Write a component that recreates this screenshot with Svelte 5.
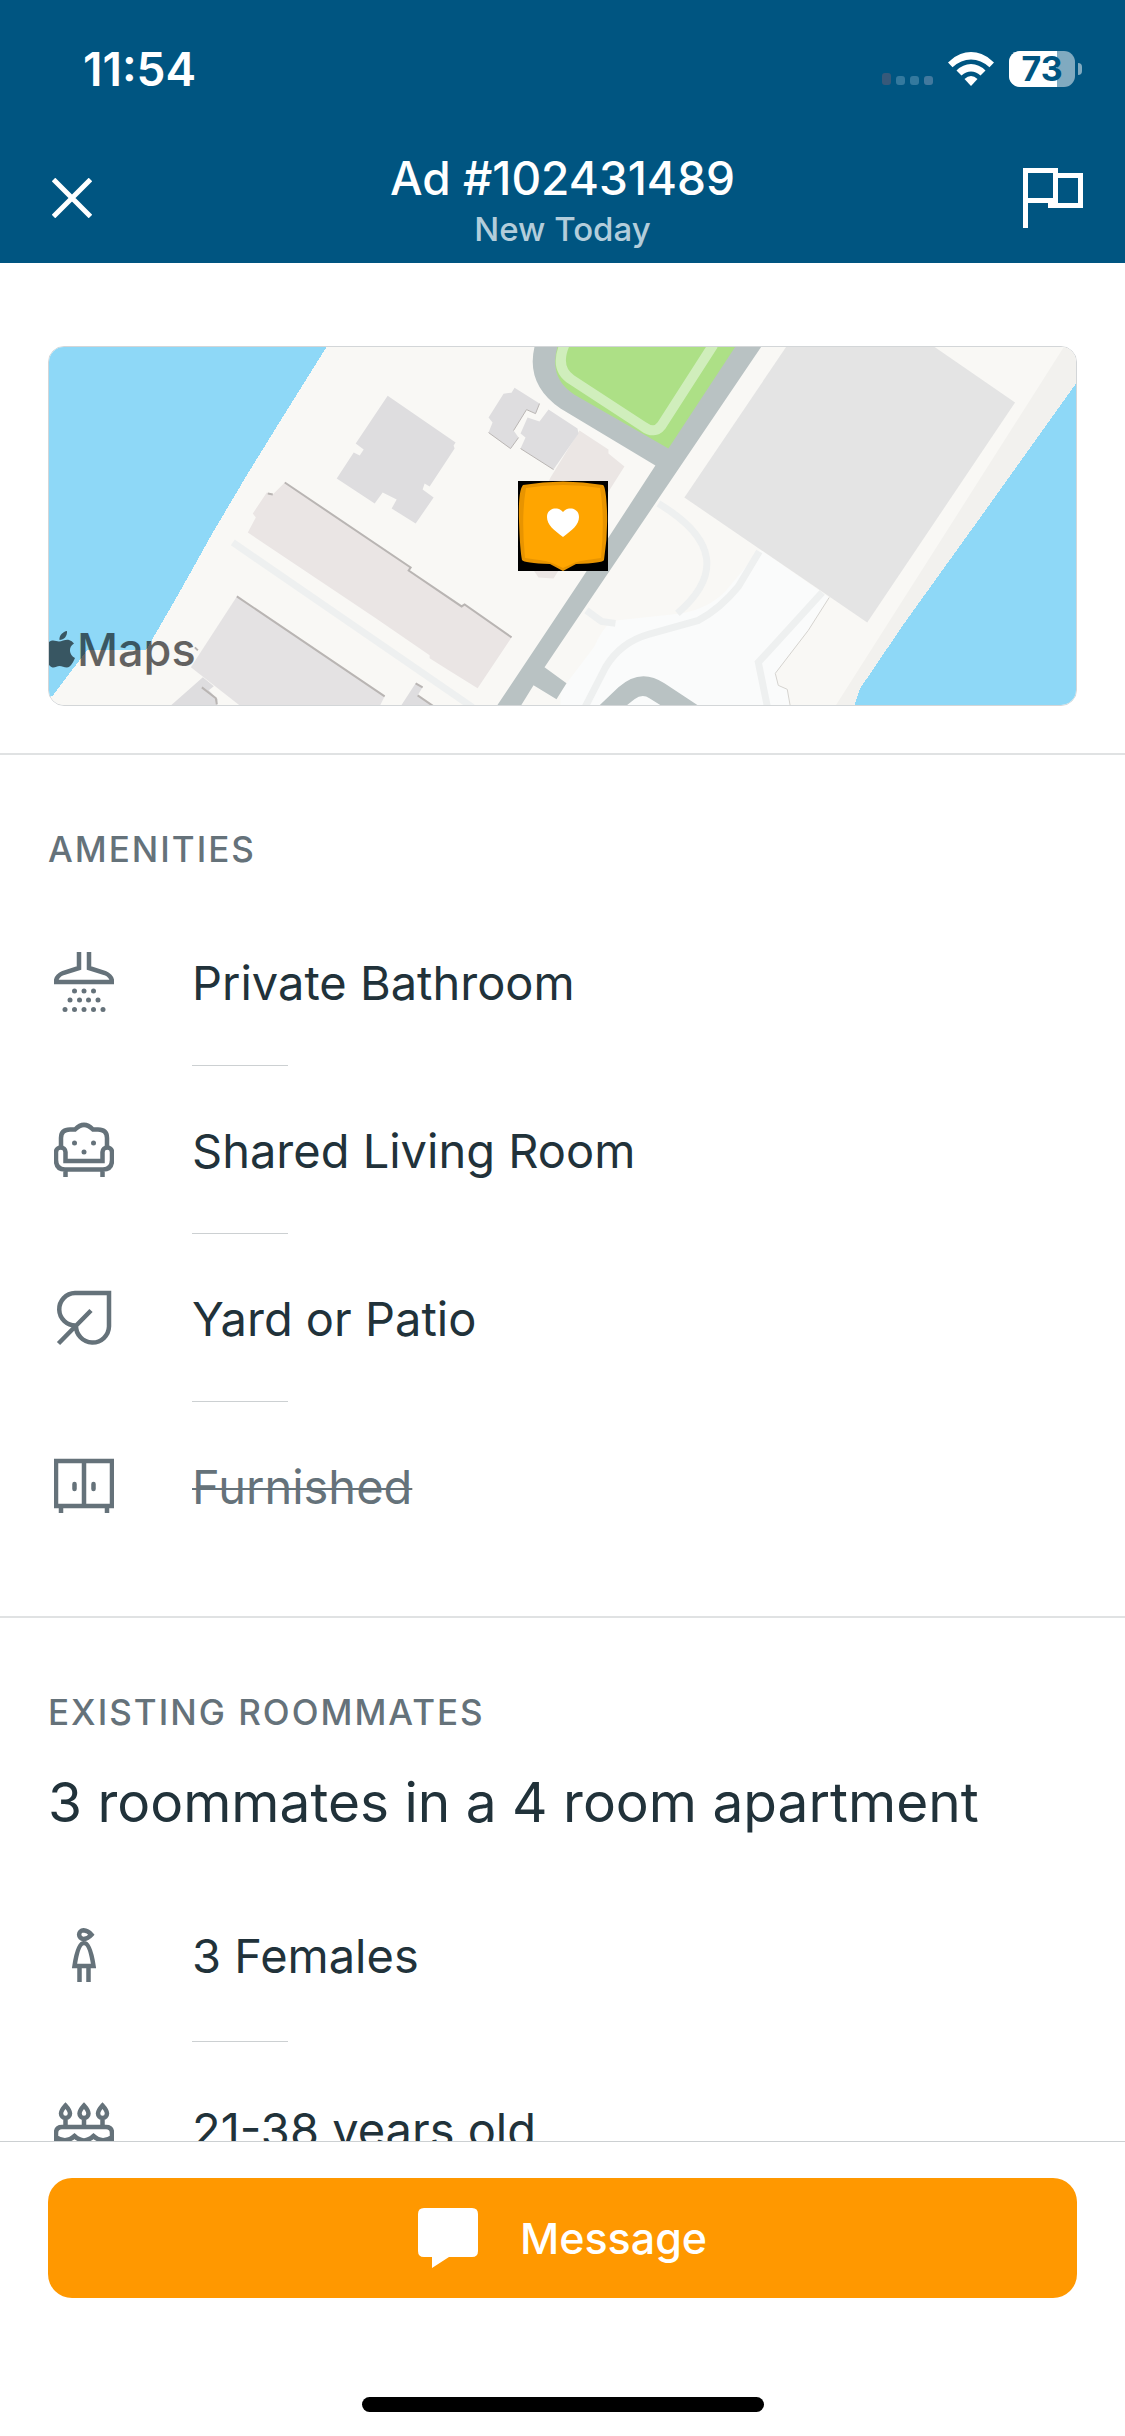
<script>
  export let adNumber = '102431489';
  export let time = '11:54';
  export let battery = 73;

  let amenities = [
    { icon: 'shower', label: 'Private Bathroom', available: true },
    { icon: 'sofa', label: 'Shared Living Room', available: true },
    { icon: 'leaf', label: 'Yard or Patio', available: true },
    { icon: 'cabinet', label: 'Furnished', available: false },
  ];
  let roommates = [
    { icon: 'female', label: '3 Females' },
    { icon: 'cake', label: '21-38 years old' },
  ];
</script>

<div class="screen">
  <header>
    <div class="status">
      <span class="time">{time}</span>
      <div class="indicators">
        <svg class="signal" width="51" height="12" viewBox="0 0 51 12" aria-hidden="true">
          <rect width="9" height="12" rx="3" fill="#37597a" />
          <rect x="14" y="3" width="9" height="9" rx="3" fill="#34799e" />
          <rect x="28" y="3" width="9" height="9" rx="3" fill="#34799e" />
          <rect x="42" y="3" width="9" height="9" rx="3" fill="#42799e" />
        </svg>
        <svg class="wifi" width="46" height="34" viewBox="0 0 46 34" aria-hidden="true">
          <path d="M0 10.500Q1 9.500 3 8Q12 0 23 0T43 8Q45 9.500 46 10.500L41.500 15.300Q33 7.500 23 7.500T4.500 15.300Z" fill="#fff" />
          <path d="M8.500 18.500Q15 12 23 12T37.500 18.500L32.500 23.500Q28 19.500 23 19.500T13.500 23.500Z" fill="#fff" />
          <path d="M16.500 27Q23 21 29.500 27L23 34Z" fill="#fff" />
        </svg>
        <div class="battery">
          <div class="level" style="width: {battery}%"></div>
          <span>{battery}</span>
        </div>
        <div class="nub"></div>
      </div>
    </div>
    <div class="nav">
      <button class="icon-button" aria-label="Close">
        <svg width="40" height="40" viewBox="0 0 40 40"><path d="M1.500 1.500 38.500 38.500M38.500 1.500 1.500 38.500" /></svg>
      </button>
      <div class="titles">
        <h1>Ad #{adNumber}</h1>
        <p>New Today</p>
      </div>
      <button class="icon-button flag" aria-label="Report this ad">
        <svg width="60" height="60" viewBox="0 0 60 60"><path d="M2.500 60V2.500H32.500V32.500H2.500M32.500 7.500H57.500V37.500H27.500V32.500" /></svg>
      </button>
    </div>
  </header>

  <main>
    <section class="map-section">
      <div class="map">
        <svg class="map-art" viewBox="0 0 1028 359" preserveAspectRatio="xMidYMid slice" aria-hidden="true">
          <rect width="1028" height="359" fill="#f9f8f5" />
          <path d="M1016 0H1030V34L925 181 856 277 812 342 806 360H787Z" fill="#f2f1ee" />
          <!-- river -->
          <g fill="#8ed8f7" shape-rendering="crispEdges">
            <path d="M0 0H278L233 72 199 127 164 186 130 247 97 304H38L4 349 0 352Z" />
            <path d="M1030 34 925 181 856 277 812 342 806 360H1030Z" />
          </g>
          <!-- plaza and footpaths -->
          <path d="M712 203 781 251 760 284 727 327 730 339 739 343 742 360H512V345L546 300Q556 277 567 274L633 267Q660 262 677 245Z" fill="#fafbfb" />
          <path d="M781 251 760 284 727 327 730 339 739 343 742 360" fill="none" stroke="#d5d3cf" />
          <g fill="none" stroke="#eef0f0" stroke-width="7">
            <path d="M184 196 424 361" />
            <path d="M711 205 690 240Q672 262 650 274L600 288Q572 296 557 321L536 362" />
            <path d="M774 246 722 303 710 316 719 360" />
            <path d="M610 157C670 193 672 230 629 267M538 264 553 275 567 277" />
          </g>
          <!-- streets -->
          <g fill="#b9c2c3">
            <path d="M486 0H713L512 297 496 321 518 337 508 353 485 339 472 360H448L532 234 607 119 512 62Q477 38 486 0Z" />
            <path d="M550 360 570 341Q592 321 616 337L651 360H614L601 352Q594 347 586 353L577 360Z" />
          </g>
          <path d="M509 0H687L620 102 526 48Q500 32 509 0Z" fill="#ade086" />
          <path d="M665 -2 613 79Q606 88 595 80L523 33Q506 22 516 -2" fill="none" stroke="#d0eebc" stroke-width="10" />
          <!-- buildings -->
          <path d="M738 0H886L967 56 819 276 636 151Z" fill="#e4e4e4" />
          <path d="M531 84 560 103 560 107 576 120 505 232 490 231 469 200 502 131Z" fill="#ebe6e4" />
          <g fill="#dedddf">
            <path d="M339 49 407 96 405 99 406 102 381 140 376 137 374 143 385 151 367 177 343 162 348 153 334 146 326 157 288 132 305 106 311 109 315 103 307 97Z" />
            <path d="M466 41 491 57 487 67 478 63 465 84 470 91 462 102 440 86 444 76 440 71 455 47 463 46Z" />
            <path d="M500 63 529 82 530 87 505 123 472 102 477 91 472 87 479 71 491 75Z" />
            <path d="M154 331 165 340 160 344 169 353 168 360H121L137 346ZM367 337 374 341 369 349 385 360H352Z" />
          </g>
          <path d="M236 136 362 221 360 224 413 260 416 258 463 291 429 342 400 324 381 312 381 309 326 271 199 186 207 171 204 167 218 146 224 148Z" fill="#eae5e4" />
          <path d="M188 250 336 350 331 360H192L142 321Z" fill="#e4e2e3" />
          <g fill="none" stroke="#b9b5b3" stroke-width="2">
            <path d="M236 136 362 221 360 224 413 260 416 258 463 291M188 250 336 350M219 147 224 148M146 301 149 304M153 341 167 352 168 358M367 337 374 341M369 349 385 360" />
            <path d="M491 57 487 67 478 63 465 84M470 91 462 102 440 86M472 102 505 123" stroke-width="1" />
          </g>
        </svg>
        <div class="attribution">
          <svg width="26" height="37" viewBox="0 0 26 37" aria-hidden="true">
            <path d="M18 0C18.500 5 15 9 10.500 9C10 4.500 14 .5 18 0ZM0 11C4 8 7 10.500 10 10.500S17 8 20 9Q23 9.800 25 12.500C19 16 20 24 26 27Q22 36.500 18 36.500C15 36.500 13 35 10.500 35S6 37 3.500 36.500Q2 36 0 34Z" />
          </svg>
          <span>Maps</span>
        </div>
        <svg class="pin" width="90" height="90" viewBox="0 0 90 90" role="img" aria-label="Ad location">
          <rect width="90" height="90" />
          <path d="M5 4Q45 -3 85 4Q88 6 89 30T86 79Q85 82 58 83L45 90 32 83Q6 82 4 79Q2 70 1 40T5 4Z" fill="#e89400" />
          <path d="M8 7Q45 1 82 7Q87 35 83 77Q60 80 56 82L45 87 34 82Q30 80 7 77Q3 35 8 7Z" fill="#ffa500" />
          <path d="M45 56C36 49 29 44 29 36C29 27 40 25 45 31C50 25 61 27 61 36C61 44 54 49 45 56Z" fill="#fff" />
        </svg>
      </div>
    </section>

    <section>
      <h2>Amenities</h2>
      <ul class="amenities">
        {#each amenities as item}
          <li class:missing={!item.available}>
            <svg class="icon" width="60" height="60" viewBox="0 0 60 60" aria-hidden="true">
              {#if item.icon === 'shower'}
                <path d="M25 0V16L9 21Q2 24 2 30H58Q58 24 51 21L35 16V0" />
                <g class="dots">
                  <circle cx="20.500" cy="39" r="2.500" /><circle cx="30" cy="39" r="2.500" /><circle cx="39.500" cy="39" r="2.500" />
                  <circle cx="16" cy="48" r="2.500" /><circle cx="25.500" cy="48" r="2.500" /><circle cx="34.500" cy="48" r="2.500" /><circle cx="44" cy="48" r="2.500" />
                  <circle cx="11" cy="57.500" r="2.500" /><circle cx="20.500" cy="57.500" r="2.500" /><circle cx="30" cy="57.500" r="2.500" /><circle cx="39.500" cy="57.500" r="2.500" /><circle cx="49" cy="57.500" r="2.500" />
                </g>
              {:else if item.icon === 'sofa'}
                <path d="M7 28V18Q7 9.500 16 9.500H21Q30 .5 39 9.500H44Q53 9.500 53 18V28" />
                <path d="M11.500 41H48.500V32C48.500 26 58 26 58 32V40Q58 49.500 49 49.500H11Q2 49.500 2 40V32C2 26 11.500 26 11.500 32ZM11.500 50V57M48.500 50V57" />
                <g class="dots"><circle cx="20.500" cy="23" r="2.500" /><circle cx="39.500" cy="23" r="2.500" /><circle cx="30" cy="32" r="2.500" /></g>
              {:else if item.icon === 'leaf'}
                <path d="M22 37.500A16.250 16.250 0 0 1 21 5H55V38.500A16 16 0 0 1 22 37.500ZM4.500 55.500 37 22.500" />
              {:else}
                <path d="M2 5H58V50H2ZM30 5V50M7 50V57M53 50V57" />
                <path d="M20.500 28V33M39.500 28V33" stroke-linecap="round" />
              {/if}
            </svg>
            <span>{item.label}</span>
          </li>
        {/each}
      </ul>
    </section>

    <section>
      <h2>Existing Roommates</h2>
      <p class="summary">3 roommates in a 4 room apartment</p>
      <ul class="roommates">
        {#each roommates as item}
          <li>
            <svg class="icon" width="60" height="60" viewBox="0 0 60 60" aria-hidden="true">
              {#if item.icon === 'female'}
                <path d="M29.500 5.200Q34 5.500 37.500 9.700Q33.500 14 29.500 14A4.400 4.400 0 0 1 29.500 5.200ZM30 18Q36 18 39.500 41H20.500Q24 18 30 18ZM25.500 41V57M34.500 41V57" />
              {:else}
                <path d="M11.500 6.500Q16 11.500 16 14.500A4.500 4.500 0 0 1 7 14.500Q7 11.500 11.500 6.500ZM30 6.500Q34.500 11.500 34.500 14.500A4.500 4.500 0 0 1 25.500 14.500Q25.500 11.500 30 6.500ZM48.500 6.500Q53 11.500 53 14.500A4.500 4.500 0 0 1 44 14.500Q44 11.500 48.500 6.500ZM11.500 19V27M30 19V27M48.500 19V27" />
                <path d="M2 60V34Q2 28 8 28H52Q58 28 58 34V60M2 38Q12 45 20.500 37Q30 46 39.500 37Q48 45 58 38" />
              {/if}
            </svg>
            <span>{item.label}</span>
          </li>
        {/each}
      </ul>
    </section>
  </main>

  <footer>
    <button class="message">
      <svg width="60" height="60" viewBox="0 0 60 60" aria-hidden="true">
        <path d="M6 0H54Q60 0 60 6V43Q60 49 54 49H31L14 60V49H6Q0 49 0 43V6Q0 0 6 0Z" fill="#fff" />
      </svg>
      Message
    </button>
    <div class="home-bar"></div>
  </footer>
</div>

<style>
  :global(body) {
    margin: 0;
    background: #fff;
  }
  .screen {
    display: flex;
    flex-direction: column;
    height: 100vh;
    overflow: hidden;
    font-family: Inter, Roboto, sans-serif;
    color: #21323a;
  }
  h1, h2, p, ul {
    margin: 0;
    padding: 0;
    font-weight: 400;
  }
  button {
    border: 0;
    font-family: inherit;
    cursor: pointer;
  }
  svg {
    display: block;
    flex: none;
  }

  header {
    flex: none;
    background: #005581;
    color: #fff;
  }
  .status {
    display: flex;
    justify-content: space-between;
    align-items: center;
    height: 138px;
    padding: 0 43px 0 83px;
  }
  .time {
    font-size: 46px;
    font-weight: 600;
  }
  .indicators {
    display: flex;
    align-items: center;
  }
  .signal {
    align-self: flex-end;
    margin: 0 15px 2px 0;
  }
  .wifi {
    margin-right: 15px;
  }
  .battery {
    position: relative;
    width: 66px;
    height: 36px;
    border-radius: 11px;
    background: #80aac0;
  }
  .level {
    height: 100%;
    border-radius: 11px 0 0 11px;
    background: #fff;
  }
  .battery span {
    position: absolute;
    inset: 0;
    color: #005581;
    font-size: 34px;
    font-weight: 700;
    line-height: 36px;
    text-align: center;
  }
  .nub {
    width: 4px;
    height: 12px;
    margin-left: 3px;
    border-radius: 0 6px 6px 0;
    background: #80aac0;
  }
  .nav {
    display: grid;
    grid-template-columns: 60px 1fr 60px;
    align-items: center;
    height: 119px;
    padding: 0 42px 6px;
  }
  .icon-button {
    display: flex;
    justify-content: center;
    padding: 0;
    background: none;
  }
  .icon-button path {
    fill: none;
    stroke: #fff;
    stroke-width: 5px;
  }
  .titles {
    padding-top: 6px;
    text-align: center;
  }
  h1 {
    font-size: 46px;
    font-weight: 500;
    line-height: 56px;
  }
  .titles p {
    color: #b3cddb;
    font-size: 33px;
    font-weight: 500;
    line-height: 46px;
  }

  main {
    flex: 1;
    min-height: 0;
    overflow: hidden;
  }
  section {
    padding: 72px 48px 0;
  }
  section + section {
    border-top: 2px solid #e0e2e3;
  }
  .map-section {
    padding: 83px 48px 47px;
  }
  .map {
    position: relative;
    height: 358px;
    border: 1px solid #d3d6d8;
    border-radius: 16px;
    overflow: hidden;
  }
  .map-art {
    width: 100%;
    height: 100%;
  }
  .attribution {
    position: absolute;
    left: 0;
    bottom: 28px;
    display: flex;
    align-items: center;
    gap: 2px;
    color: #000;
    font-size: 45px;
    font-weight: 500;
    opacity: 0.6;
  }
  .pin {
    position: absolute;
    top: 50%;
    left: 50%;
    margin: -45px;
  }

  h2 {
    color: #65727a;
    font-size: 35px;
    font-weight: 500;
    line-height: 44px;
    letter-spacing: 2px;
    text-transform: uppercase;
  }
  ul {
    list-style: none;
  }
  .amenities {
    padding: 27px 0 46px;
  }
  li {
    position: relative;
    display: flex;
    align-items: center;
    height: 168px;
    padding-left: 6px;
    font-size: 47px;
  }
  li span {
    margin-left: 78px;
  }
  /* short rule between two rows, under the label */
  li:not(:last-child)::after {
    content: '';
    position: absolute;
    left: 144px;
    bottom: 0;
    width: 96px;
    height: 1px;
    background: #ccd0d2;
  }
  .missing {
    color: #65727a;
    text-decoration: line-through;
    text-decoration-thickness: 2px;
  }
  .icon path {
    fill: none;
    stroke: #65727a;
    stroke-width: 4.500px;
  }
  .dots {
    fill: #65727a;
  }
  .summary {
    margin-top: 34px;
    font-size: 55px;
    line-height: 68px;
  }
  .roommates {
    padding-top: 32px;
  }
  .roommates li {
    height: 174px;
  }

  footer {
    flex: none;
    padding: 36px 48px 24px;
    border-top: 1px solid #ccd0d2;
    background: #fff;
  }
  .message {
    display: flex;
    justify-content: center;
    align-items: center;
    gap: 42px;
    width: 100%;
    height: 120px;
    border-radius: 24px;
    background: #ff9800;
    color: #fff;
    font-size: 43px;
    font-weight: 500;
  }
  .home-bar {
    width: 402px;
    height: 15px;
    margin: 99px auto 0;
    border-radius: 8px;
    background: #000;
  }
</style>
